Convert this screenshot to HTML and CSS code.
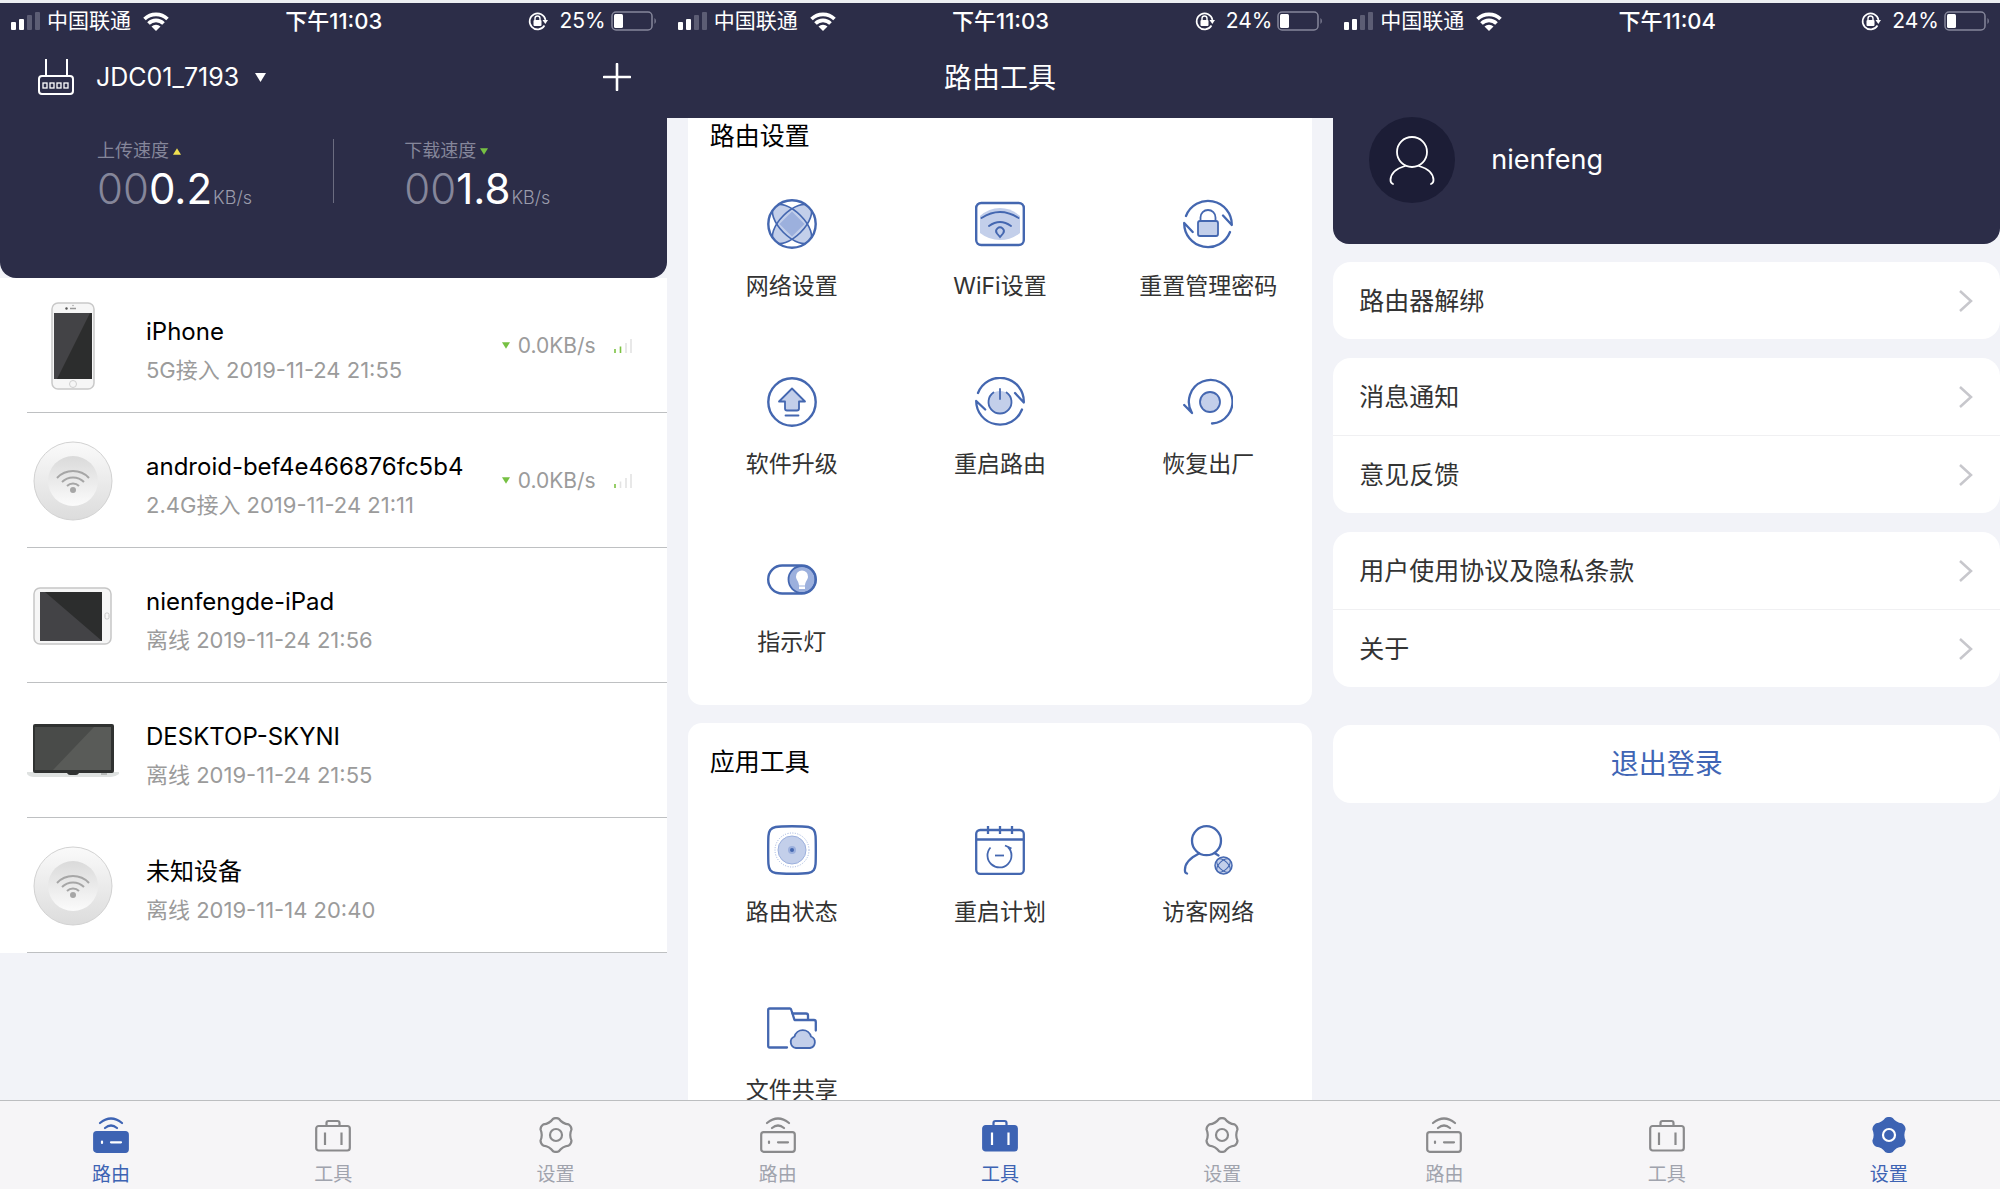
FILE: index.html
```html
<!DOCTYPE html>
<html lang="zh-CN">
<head>
<meta charset="utf-8">
<meta name="viewport" content="width=device-width, initial-scale=1">
<title>路由工具</title>
<link rel="stylesheet" href="styles.css">
</head>
<body>
<svg class="sprite" aria-hidden="true">
  <defs>
    <linearGradient id="disc-outer" x1="0" y1="0" x2="0" y2="1"><stop offset="0" stop-color="#fafafa"/><stop offset="1" stop-color="#dcdcdc"/></linearGradient>
    <linearGradient id="disc-inner" x1="0" y1="0" x2="0" y2="1"><stop offset="0" stop-color="#dadada"/><stop offset="1" stop-color="#fbfbfb"/></linearGradient>
    <clipPath id="globe-clip"><circle cx="25" cy="25" r="24"/></clipPath>
    <clipPath id="lens-clip"><path d="M25 12.500L37.500 25 25 37.500 12.500 25z"/></clipPath>
  </defs>

  <symbol id="signal" viewBox="0 0 30 18">
    <rect x="0" y="10" width="5" height="8" rx="1" fill="#fff"/><rect x="8" y="7" width="5" height="11" rx="1" fill="#fff"/>
    <rect x="16" y="3" width="5" height="15" rx="1" fill="#5c5d74"/><rect x="24" y="0" width="5" height="18" rx="1" fill="#5c5d74"/>
  </symbol>
  <symbol id="wifi" viewBox="0 0 26 19">
    <g fill="none" stroke="#fff" stroke-width="3.6"><path d="M1.5 7a16.500 16.500 0 0 1 23 0"/><path d="M5.500 11.500a10.500 10.500 0 0 1 15 0"/></g>
    <path d="M8.500 14.500a6.500 6.500 0 0 1 9 0L13 19z" fill="#fff"/>
  </symbol>
  <symbol id="rotation-lock" viewBox="0 0 20 20">
    <path d="M16.500 14.500A8 8 0 1 1 17.500 9" fill="none" stroke="#fff" stroke-width="1.600"/><path d="M14.500 9H20l-2.700 4z" fill="#fff"/>
    <rect x="5.500" y="9" width="8" height="6" rx="1" fill="#fff"/><path d="M7 9V7.500a2.500 2.500 0 0 1 5 0V9" fill="none" stroke="#fff" stroke-width="1.400"/>
  </symbol>
  <symbol id="battery" viewBox="0 0 46 20">
    <rect x="1" y="1" width="40" height="18" rx="4" fill="none" stroke="#85869a" stroke-width="1.500"/>
    <rect x="3" y="3" width="9" height="14" rx="1.500" fill="#fff"/><path d="M43.500 7a4 4 0 0 1 0 6z" fill="#85869a"/>
  </symbol>

  <symbol id="router-line" viewBox="0 0 38 38">
    <g fill="none" stroke="#fff" stroke-width="2"><rect x="2" y="18" width="34" height="18" rx="3"/><path d="M9 18V1M30 18V1"/></g>
    <g fill="none" stroke="#fff" stroke-width="1.300"><rect x="6" y="25" width="4" height="5"/><rect x="13" y="25" width="4" height="5"/><rect x="20" y="25" width="4" height="5"/><rect x="27" y="25" width="4" height="5"/></g>
  </symbol>
  <symbol id="plus" viewBox="0 0 28 28"><path d="M14 1v26M1 14h26" stroke="#fff" stroke-width="2.600" stroke-linecap="round"/></symbol>
  <symbol id="tri-down" viewBox="0 0 10 8"><path d="M0 0h10L5 8z" fill="currentColor"/></symbol>
  <symbol id="tri-up" viewBox="0 0 10 8"><path d="M0 8h10L5 0z" fill="currentColor"/></symbol>
  <symbol id="chevron" viewBox="0 0 16 24"><path d="M2 2l11 10L2 22" fill="none" stroke="#c7c7cc" stroke-width="2.500"/></symbol>
  <symbol id="bars-two" viewBox="0 0 18 14"><path d="M1 14v-4M6.500 14V7.500" stroke="#7cc242" stroke-width="1.600"/><path d="M12 14V4M17 14V0" stroke="#e3e3e3" stroke-width="1.600"/></symbol>
  <symbol id="bars-one" viewBox="0 0 18 14"><path d="M1 14v-4" stroke="#7cc242" stroke-width="1.600"/><path d="M6.500 14V7.500M12 14V4M17 14V0" stroke="#e3e3e3" stroke-width="1.600"/></symbol>

  <symbol id="dev-phone" viewBox="0 0 92 88">
    <rect x="25" y="1" width="42" height="86" rx="6" fill="#f6f6f6" stroke="#c9c9c9" stroke-width="1.500"/>
    <path d="M27 11h38v66H27z" fill="#2c2d2d"/><path d="M27 11h36L30 77h-3z" fill="#434346"/>
    <circle cx="46" cy="82" r="3.500" fill="none" stroke="#cfcfcf"/><circle cx="39.500" cy="6.500" r="1.200" fill="#555"/><path d="M43 6.500h6" stroke="#999" stroke-width="1.500"/><circle cx="46" cy="3.500" r=".7" fill="#999"/>
  </symbol>
  <symbol id="dev-disc" viewBox="0 0 92 88">
    <circle cx="46" cy="44" r="39" fill="url(#disc-outer)" stroke="#d2d2d2"/><circle cx="46" cy="44" r="25" fill="url(#disc-inner)"/>
    <g fill="none" stroke="#a6a6a6" stroke-width="2"><path d="M30 41a22 22 0 0 1 32 0"/><path d="M35 45a15.500 15.500 0 0 1 22 0"/><path d="M40 49a8.500 8.500 0 0 1 12 0"/></g><circle cx="46" cy="53" r="3" fill="#a6a6a6"/>
  </symbol>
  <symbol id="dev-tablet" viewBox="0 0 92 88">
    <rect x="7" y="16" width="77" height="56" rx="6" fill="#f6f6f6" stroke="#c6c6c6" stroke-width="1.500"/>
    <path d="M13 20h62v49H13z" fill="#434346"/><path d="M18 20h57v49z" fill="#2c2d2d"/><rect x="78" y="41" width="4" height="6" rx="1.500" fill="none" stroke="#c6c6c6"/>
  </symbol>
  <symbol id="dev-laptop" viewBox="0 0 92 88">
    <path d="M0 65h92v2q-4 3-8 3H7q-5 0-7-3z" fill="#dfe2e1"/><rect x="6" y="17" width="81" height="49" rx="2" fill="#303231"/>
    <path d="M8 20h76v43H8z" fill="#595b58"/><path d="M8 20h59L26 63H8z" fill="#494b49"/><path d="M40 65h12v1q-1 2-3 2h-6q-2 0-3-2z" fill="#303231"/><path d="M74 67h6" stroke="#8b8e8c"/>
  </symbol>

  <symbol id="t-network" viewBox="0 0 50 50">
    <g clip-path="url(#globe-clip)"><ellipse cx="25" cy="25" rx="25" ry="12" transform="rotate(45 25 25)" fill="#c3cfea"/><ellipse cx="25" cy="25" rx="25" ry="12" transform="rotate(-45 25 25)" fill="#c3cfea"/>
    <circle cx="25" cy="25" r="15" fill="#9cb0dd" clip-path="url(#lens-clip)"/>
    <g fill="none" stroke="#4467b0" stroke-width="1.700"><ellipse cx="25" cy="25" rx="25" ry="12" transform="rotate(45 25 25)"/><ellipse cx="25" cy="25" rx="25" ry="12" transform="rotate(-45 25 25)"/></g></g>
    <circle cx="25" cy="25" r="23.700" fill="none" stroke="#4467b0" stroke-width="2.400"/>
  </symbol>
  <symbol id="t-wifi" viewBox="0 0 50 50">
    <path d="M5 17Q14 9 25 9t20 8v17Q36 41 25 41T5 34z" fill="#c3cfea"/>
    <g fill="none" stroke="#4467b0" stroke-width="2.400" stroke-linecap="round"><rect x="1.200" y="4" width="47.600" height="42" rx="5"/><path d="M6.500 19Q25 7 43.500 19M14 27q11-8 22 0" stroke-width="1.900"/><path d="M25 38l-3-3.500a3.800 3.800 0 1 1 6 0z" stroke-width="1.900"/></g>
  </symbol>
  <symbol id="t-password" viewBox="0 0 50 50">
    <g fill="none" stroke="#4467b0" stroke-width="2.300" stroke-linecap="round" stroke-linejoin="round"><path d="M3 17A23.700 23.700 0 0 1 48.800 26L40 16.500"/><path d="M47 33A23.700 23.700 0 0 1 1.200 24l8.500 9"/><path d="M17.500 22v-3.500a7.500 7.500 0 0 1 15 0V22" stroke-width="1.800"/><rect x="15" y="22" width="20" height="15" rx="2" fill="#c3cfea" stroke-width="1.800"/></g>
  </symbol>
  <symbol id="t-upgrade" viewBox="0 0 50 50">
    <g fill="none" stroke="#4467b0" stroke-width="2.400" stroke-linejoin="round" stroke-linecap="round"><circle cx="25" cy="25" r="23.700"/><path d="M25 11.500L12 24.500h6v7q0 2 2 2h10q2 0 2-2v-7h6z" fill="#c3cfea" stroke-width="1.800"/><path d="M18.500 38.500h13" stroke-width="1.800"/></g>
  </symbol>
  <symbol id="t-restart" viewBox="0 0 50 50">
    <circle cx="25" cy="25.500" r="11.500" fill="#c3cfea"/>
    <g fill="none" stroke="#4467b0" stroke-width="2.300" stroke-linecap="round" stroke-linejoin="round"><path d="M3 16A23.700 23.700 0 0 1 48.800 25.500L40 16"/><path d="M47 32.500A23.700 23.700 0 0 1 1.200 24l9 8.500"/><path d="M18.500 15.500a11.500 11.500 0 1 0 13 0M25 12v10" stroke-width="1.800"/></g>
  </symbol>
  <symbol id="t-reset" viewBox="0 0 50 50">
    <g fill="none" stroke="#4467b0" stroke-width="2.300" stroke-linecap="round" stroke-linejoin="round"><path d="M29 46.500A21.800 21.800 0 1 0 9 36L1.200 28"/><circle cx="27" cy="25" r="10" fill="#c3cfea" stroke-width="1.800"/></g>
  </symbol>
  <symbol id="t-light" viewBox="0 0 50 50">
    <circle cx="35" cy="24.500" r="13.500" fill="#9cb0dd"/><path d="M35 15.500a6 6 0 0 0-6 6.300c0 3 3 5 3 8.700h6c0-3.700 3-5.700 3-8.700a6 6 0 0 0-6-6.300zM32 31.500h6V34h-6z" fill="#fff"/>
    <g fill="none" stroke="#4467b0" stroke-width="2.400"><rect x="1.200" y="10.500" width="47.600" height="28" rx="14"/><circle cx="35" cy="24.500" r="13.500" stroke-width="1.800"/></g>
  </symbol>
  <symbol id="t-status" viewBox="0 0 50 50">
    <path d="M25 1.200c17 0 19.500 1 21.800 3.800 2 3 2 6 2 20s0 17-2 20c-2.300 3-4.800 3.800-21.800 3.800S5.500 48 3.200 45c-2-3-2-6-2-20s0-17 2-20C5.500 2.200 8 1.200 25 1.200z" fill="none" stroke="#4467b0" stroke-width="2.400"/>
    <circle cx="25" cy="25" r="17" fill="none" stroke="#9cb0dd" stroke-dasharray="1 1.500"/><circle cx="25" cy="25" r="14" fill="#c3cfea" stroke="#9cb0dd"/><circle cx="25" cy="25" r="4" fill="#9cb0dd"/><circle cx="25" cy="25" r="2" fill="#4467b0"/>
  </symbol>
  <symbol id="t-schedule" viewBox="0 0 50 50">
    <g fill="none" stroke="#4467b0" stroke-width="2.300"><rect x="1.200" y="5" width="47.600" height="43.800" rx="4"/><path d="M1 14.500h48M13 1v8M25 1v8M37 1v8"/><path d="M15.500 22.500A12 12 0 1 0 33 22M30 20.500l6.500 3" stroke-width="1.800"/><path d="M20 30.500h9" stroke-width="1.800"/></g>
  </symbol>
  <symbol id="t-guest" viewBox="0 0 50 50">
    <g fill="none" stroke="#4467b0" stroke-width="2.300" stroke-linecap="round"><circle cx="23.500" cy="15.700" r="14.500"/><path d="M16 28.500Q1 36 2 46q0 2 2 2.500M31.500 28l4 2.500"/></g>
    <circle cx="40.500" cy="40.500" r="8.500" fill="#c3cfea" stroke="#4467b0" stroke-width="1.500"/><g fill="none" stroke="#4467b0"><ellipse cx="40.500" cy="40.500" rx="8.500" ry="4.500" transform="rotate(45 40.500 40.500)"/><ellipse cx="40.500" cy="40.500" rx="8.500" ry="4.500" transform="rotate(-45 40.500 40.500)"/></g>
  </symbol>
  <symbol id="t-share" viewBox="0 0 50 50">
    <g fill="none" stroke="#4467b0" stroke-width="2.300" stroke-linejoin="round" stroke-linecap="round"><path d="M20 44.500H2.700q-1.500 0-1.500-1.500V7q0-1.500 1.500-1.500H23q1 0 1.500 2l3 9.500H47q1.800 0 1.800 2v8.500"/><path d="M25.500 10.500H39q2 0 2 2V16"/><path d="M29 45a6 6 0 0 1-1.500-11.500 8.500 8.500 0 0 1 16.500 0A6 6 0 0 1 43 45z" fill="#c3cfea" stroke-width="1.800"/></g>
  </symbol>
  <symbol id="person" viewBox="0 0 46 50">
    <g fill="none" stroke="#fff" stroke-width="1.800" stroke-linecap="round"><circle cx="23" cy="17" r="15"/><path d="M16 31Q2 35 1.500 45q0 3 2.500 4M30 31q14 4 14.500 14 0 3-2.500 4"/></g>
  </symbol>

  <symbol id="tab-router" viewBox="0 0 36 36">
    <g fill="none" stroke="currentColor" stroke-width="2.200" stroke-linecap="round"><path d="M7 6q11-9 22 0M12 11q6-5 12 0"/><rect class="solid" x="1.200" y="15.200" width="33.600" height="19.600" rx="2.500"/></g>
    <path class="mark" d="M9 24.500v1.500M18 25.300h10" fill="none" stroke-width="2.200" stroke-linecap="round"/>
  </symbol>
  <symbol id="tab-tools" viewBox="0 0 36 36">
    <g fill="none" stroke="currentColor" stroke-width="2.200"><path d="M11.500 8.500V6q0-2 2-2h9q2 0 2 2v2.500"/><rect class="solid" x="1.200" y="9" width="33.600" height="24.500" rx="2.500"/></g>
    <path class="mark" d="M10 15.500v12.500M26.500 15.500v12.500" fill="none" stroke-width="2.200"/>
  </symbol>
  <symbol id="tab-settings" viewBox="0 0 36 36">
    <path class="solid" d="M15.130 1.750Q18 .3 20.870 1.750Q24.500 6.740 30.640 7.400Q33.330 9.150 33.500 12.360Q31 18 33.500 23.640Q33.330 26.850 30.640 28.600Q24.500 29.260 20.870 34.250Q18 35.700 15.130 34.250Q11.500 29.260 5.360 28.600Q2.670 26.850 2.500 23.640Q5 18 2.500 12.360Q2.670 9.150 5.360 7.400Q11.500 6.740 15.130 1.750z" stroke="currentColor" stroke-width="2.200" stroke-linejoin="round"/>
    <circle class="mark" cx="18" cy="18" r="6" fill="none" stroke-width="2.200"/>
  </symbol>
</svg>

<main class="screens">
  <section class="screen" aria-label="路由">
    <header class="top top--rounded">
      <div class="status">
        <div class="status__side"><svg class="i-signal"><use href="#signal"/></svg><span>中国联通</span><svg class="i-wifi"><use href="#wifi"/></svg></div>
        <time>下午11:03</time>
        <div class="status__side status__side--end"><svg class="i-lock"><use href="#rotation-lock"/></svg><span>25%</span><svg class="i-battery"><use href="#battery"/></svg></div>
      </div>
      <div class="nav nav--router">
        <svg class="i-router"><use href="#router-line"/></svg>
        <button class="picker" type="button">JDC01_7193<svg class="i-caret"><use href="#tri-down"/></svg></button>
        <button class="add" type="button" aria-label="添加"><svg class="i-plus"><use href="#plus"/></svg></button>
      </div>
      <div class="speeds">
        <div class="speed">
          <div class="speed__label">上传速度<svg class="i-tri up"><use href="#tri-up"/></svg></div>
          <div class="speed__value"><span class="dim">00</span>0.2<small>KB/s</small></div>
        </div>
        <div class="speed">
          <div class="speed__label">下载速度<svg class="i-tri down"><use href="#tri-down"/></svg></div>
          <div class="speed__value"><span class="dim">00</span>1.8<small>KB/s</small></div>
        </div>
      </div>
    </header>
    <ul class="devices">
      <li class="device"><svg class="device__pic"><use href="#dev-phone"/></svg><div class="device__text"><h2>iPhone</h2><p>5G接入 2019-11-24 21:55</p></div><div class="device__rate"><svg class="i-tri down"><use href="#tri-down"/></svg><span>0.0KB/s</span><svg class="i-bars"><use href="#bars-two"/></svg></div></li>
      <li class="device"><svg class="device__pic"><use href="#dev-disc"/></svg><div class="device__text"><h2>android-bef4e466876fc5b4</h2><p>2.4G接入 2019-11-24 21:11</p></div><div class="device__rate"><svg class="i-tri down"><use href="#tri-down"/></svg><span>0.0KB/s</span><svg class="i-bars"><use href="#bars-one"/></svg></div></li>
      <li class="device"><svg class="device__pic"><use href="#dev-tablet"/></svg><div class="device__text"><h2>nienfengde-iPad</h2><p>离线 2019-11-24 21:56</p></div></li>
      <li class="device"><svg class="device__pic"><use href="#dev-laptop"/></svg><div class="device__text"><h2>DESKTOP-SKYNI</h2><p>离线 2019-11-24 21:55</p></div></li>
      <li class="device"><svg class="device__pic"><use href="#dev-disc"/></svg><div class="device__text"><h2>未知设备</h2><p>离线 2019-11-14 20:40</p></div></li>
    </ul>
    <nav class="tabs">
      <a class="tab tab--on" href="#router"><svg><use href="#tab-router"/></svg>路由</a>
      <a class="tab" href="#tools"><svg><use href="#tab-tools"/></svg>工具</a>
      <a class="tab" href="#settings"><svg><use href="#tab-settings"/></svg>设置</a>
    </nav>
  </section>

  <section class="screen" aria-label="工具">
    <header class="top">
      <div class="status">
        <div class="status__side"><svg class="i-signal"><use href="#signal"/></svg><span>中国联通</span><svg class="i-wifi"><use href="#wifi"/></svg></div>
        <time>下午11:03</time>
        <div class="status__side status__side--end"><svg class="i-lock"><use href="#rotation-lock"/></svg><span>24%</span><svg class="i-battery"><use href="#battery"/></svg></div>
      </div>
      <div class="nav nav--title"><h1>路由工具</h1></div>
    </header>
    <div class="panels">
      <section class="panel panel--scrolled">
        <h2>路由设置</h2>
        <div class="tools">
          <a class="tool" href="#network"><svg><use href="#t-network"/></svg>网络设置</a>
          <a class="tool" href="#wifi-settings"><svg><use href="#t-wifi"/></svg>WiFi设置</a>
          <a class="tool" href="#password"><svg><use href="#t-password"/></svg>重置管理密码</a>
          <a class="tool" href="#upgrade"><svg><use href="#t-upgrade"/></svg>软件升级</a>
          <a class="tool" href="#restart"><svg><use href="#t-restart"/></svg>重启路由</a>
          <a class="tool" href="#reset"><svg><use href="#t-reset"/></svg>恢复出厂</a>
          <a class="tool" href="#light"><svg><use href="#t-light"/></svg>指示灯</a>
        </div>
      </section>
      <section class="panel">
        <h2>应用工具</h2>
        <div class="tools">
          <a class="tool" href="#status"><svg><use href="#t-status"/></svg>路由状态</a>
          <a class="tool" href="#schedule"><svg><use href="#t-schedule"/></svg>重启计划</a>
          <a class="tool" href="#guest"><svg><use href="#t-guest"/></svg>访客网络</a>
          <a class="tool" href="#share"><svg><use href="#t-share"/></svg>文件共享</a>
        </div>
      </section>
    </div>
    <nav class="tabs">
      <a class="tab" href="#router"><svg><use href="#tab-router"/></svg>路由</a>
      <a class="tab tab--on" href="#tools"><svg><use href="#tab-tools"/></svg>工具</a>
      <a class="tab" href="#settings"><svg><use href="#tab-settings"/></svg>设置</a>
    </nav>
  </section>

  <section class="screen" aria-label="设置">
    <header class="top top--rounded">
      <div class="status">
        <div class="status__side"><svg class="i-signal"><use href="#signal"/></svg><span>中国联通</span><svg class="i-wifi"><use href="#wifi"/></svg></div>
        <time>下午11:04</time>
        <div class="status__side status__side--end"><svg class="i-lock"><use href="#rotation-lock"/></svg><span>24%</span><svg class="i-battery"><use href="#battery"/></svg></div>
      </div>
      <div class="profile"><span class="avatar"><svg><use href="#person"/></svg></span><span>nienfeng</span></div>
    </header>
    <div class="groups">
      <div class="group"><a class="row" href="#unbind">路由器解绑<svg><use href="#chevron"/></svg></a></div>
      <div class="group"><a class="row" href="#messages">消息通知<svg><use href="#chevron"/></svg></a><a class="row" href="#feedback">意见反馈<svg><use href="#chevron"/></svg></a></div>
      <div class="group"><a class="row" href="#terms">用户使用协议及隐私条款<svg><use href="#chevron"/></svg></a><a class="row" href="#about">关于<svg><use href="#chevron"/></svg></a></div>
      <button class="logout" type="button">退出登录</button>
    </div>
    <nav class="tabs">
      <a class="tab" href="#router"><svg><use href="#tab-router"/></svg>路由</a>
      <a class="tab" href="#tools"><svg><use href="#tab-tools"/></svg>工具</a>
      <a class="tab tab--on" href="#settings"><svg><use href="#tab-settings"/></svg>设置</a>
    </nav>
  </section>
</main>
</body>
</html>
```
FILE: styles.css
```css
* { box-sizing: border-box; }

body {
  margin: 0;
  background: #f2f3f8;
  font-family: Inter, "Noto Sans CJK SC", sans-serif;
  color: #333;
}

h1, h2, p, ul { margin: 0; padding: 0; font-weight: 400; }
ul { list-style: none; }
a { color: inherit; text-decoration: none; }
button { margin: 0; padding: 0; border: 0; background: none; font: inherit; color: inherit; cursor: pointer; }
svg { display: block; flex: none; }
.sprite { position: absolute; width: 0; height: 0; }

.screens {
  display: grid;
  grid-template-columns: repeat(3, minmax(0, 1fr));
  height: 100vh;
  border-top: 3px solid #eceef2;
}
.screen { display: flex; flex-direction: column; min-height: 0; overflow: hidden; }

/* header */
.top { flex: none; background: #2c2d48; color: #fff; }
.top--rounded { border-radius: 0 0 16px 16px; }

.status {
  display: grid;
  grid-template-columns: 1fr auto 1fr;
  align-items: center;
  height: 36px;
  padding: 0 10px 0 11px;
  font-size: 22px;
  line-height: 32px;
}
.status__side { display: flex; align-items: center; gap: 6px; font-size: 21px; }
.status__side--end { gap: 5px; }
.status__side--end { justify-content: flex-end; }
.status time { font-weight: 500; }
.i-signal { width: 30px; height: 18px; }
.i-wifi { width: 26px; height: 19px; margin-left: 6px; }
.i-lock { width: 20px; height: 20px; margin-right: 6px; }
.i-battery { width: 46px; height: 20px; }

.nav { display: flex; align-items: center; height: 79px; padding-bottom: 2px; }
.nav--router { padding: 0 36px 3px 37px; }
.nav--title { justify-content: center; }
.nav h1 { font-size: 28px; line-height: 40px; }
.i-router { width: 38px; height: 38px; }
.picker { display: flex; align-items: center; gap: 16px; margin-left: 21px; font-size: 25px; line-height: 32px; }
.i-caret { width: 11px; height: 9px; }
.add { margin-left: auto; }
.i-plus { width: 28px; height: 28px; }

.speeds { display: grid; grid-template-columns: 1fr 1fr; padding: 21px 0 75px; }
.speed { height: 64px; padding-left: 97px; }
.speed + .speed { padding-left: 70px; border-left: 1px solid #6b6c80; }
.speed__label { display: flex; align-items: center; gap: 4px; font-size: 18px; line-height: 24px; color: #85869a; }
.speed__value { font-size: 42px; line-height: 52px; }
.speed__value .dim { font-weight: 300; color: #85869a; }
.speed__value small { margin-left: 1px; font-size: 18px; font-weight: 300; color: #9a9bab; }
.i-tri { width: 8px; height: 7px; }
.up { color: #f0e050; }
.down { color: #76c043; }

/* connected devices */
.devices { flex: 1; min-height: 0; }
.device { display: flex; align-items: center; height: 135px; padding-left: 27px; background: linear-gradient(#bec0c2, #bec0c2) 27px 100% / 100% 1px no-repeat #fff; }
.device__pic { width: 92px; height: 88px; }
.device__text { flex: 1; margin: 13px 0 0 27px; }
.device h2 { font-size: 24px; line-height: 36px; color: #000; white-space: nowrap; }
.device p { font-size: 22px; line-height: 40px; color: #9b9b9b; white-space: nowrap; }
.device__rate { display: flex; align-items: center; padding-right: 35px; font-size: 21px; line-height: 28px; color: #9b9b9b; }
.device__rate span { margin: 0 18px 0 8px; }
.i-bars { width: 18px; height: 14px; }

/* tool panels */
.panels { flex: 1; min-height: 0; overflow: hidden; padding: 0 21px; }
.panel { margin-bottom: 18px; padding: 21px 0 46px; background: #fff; border-radius: 14px; }
.panel--scrolled { padding-top: 0; border-radius: 0 0 14px 14px; }
.panel h2 { padding-left: 22px; font-size: 25px; line-height: 36px; color: #000; }
.tools { display: grid; grid-template-columns: repeat(3, 1fr); row-gap: 74px; padding-top: 45px; }
.tool { display: flex; flex-direction: column; align-items: center; gap: 20px; font-size: 23px; line-height: 34px; }
.tool svg { width: 50px; height: 50px; }

/* settings */
.profile { display: flex; align-items: center; gap: 36px; padding: 78px 36px 41px; font-size: 27px; line-height: 36px; }
.avatar { display: grid; place-items: center; width: 86px; height: 86px; border-radius: 50%; background: #1c1d36; }
.avatar svg { width: 46px; height: 50px; }
.groups { flex: 1; min-height: 0; display: flex; flex-direction: column; gap: 19px; padding-top: 18px; }
.group { background: #fff; border-radius: 18px; }
.row { display: flex; align-items: center; justify-content: space-between; height: 77px; padding: 0 26px; font-size: 25px; line-height: 36px; }
.row + .row { height: 78px; border-top: 1px solid #f0f0f2; }
.row svg { width: 16px; height: 24px; }
.logout { height: 78px; margin-top: 19px; border-radius: 18px; background: #fff; font-size: 28px; line-height: 40px; color: #4065b5; }

/* bottom tabs */
.tabs { flex: none; display: grid; grid-template-columns: repeat(3, 1fr); height: 89px; border-top: 1px solid #bcbec0; background: #f6f5f7; }
.tab { display: flex; flex-direction: column; align-items: center; gap: 8px; padding-top: 16px; font-size: 19px; line-height: 28px; color: #a0a3ad; }
.tab svg { width: 36px; height: 36px; color: #8a8a8c; }
.tab--on, .tab--on svg { color: #3d63b3; }
.tab--on svg { --solid: #3d63b3; --mark: #fff; }
.solid { fill: var(--solid, none); }
.mark { stroke: var(--mark, currentColor); }
```
